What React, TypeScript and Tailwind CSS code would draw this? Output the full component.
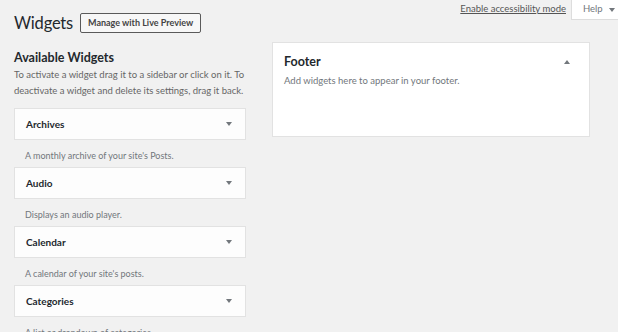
const FONT = { fontFamily: 'Lato, "Liberation Sans", sans-serif' };

const widgets = [
  { name: 'Archives', desc: "A monthly archive of your site's Posts." },
  { name: 'Audio', desc: 'Displays an audio player.' },
  { name: 'Calendar', desc: "A calendar of your site's posts." },
  { name: 'Categories', desc: 'A list or dropdown of categories.' },
];

function Caret({ up = false }: { up?: boolean }) {
  return (
    <svg width="6" height="4" viewBox="0 0 6 4" className="shrink-0">
      <path d={up ? 'M0 4 L3 0 L6 4 Z' : 'M0 0 L6 0 L3 4 Z'} fill="#72777c" />
    </svg>
  );
}

export default function App() {
  return (
    <div className="relative h-[332px] w-[618px] overflow-hidden bg-[#f1f1f1] text-[#444]" style={FONT}>
      {/* screen meta links */}
      <div className="absolute right-0 top-0 flex items-start gap-[5px]">
        <a className="mt-[3px] text-[9.5px] leading-[12px] text-[#555] underline">Enable accessibility mode</a>
        <div className="flex h-[20px] w-[47px] items-center gap-[6px] border border-t-0 border-r-0 border-[#ddd] bg-white pl-[11px] text-[9.5px] text-[#72777c]">
          Help <Caret />
        </div>
      </div>

      <div className="mt-[12px] flex h-[21px] items-center gap-[7px] pl-[14px]">
        <h1 className="text-[16.5px] font-normal leading-[20px] tracking-[-0.2px] text-[#23282d]">Widgets</h1>
        <button className="flex h-[20px] items-center rounded-[2px] border border-[#5a5a5a] bg-[#f7f7f7] px-[7px] text-[9px] font-bold text-[#444]">
          Manage with Live Preview
        </button>
      </div>

      <div className="mt-[9px] flex gap-[26px] pl-[14px]">
        <div className="w-[232px] pt-[8px]">
          <h2 className="text-[12.5px] font-bold leading-[16px] text-[#23282d]">Available Widgets</h2>
          <p className="mt-[1px] w-[236px] text-[9.5px] leading-[16px] text-[#666]">
            To activate a widget drag it to a sidebar or click on it. To deactivate a widget and delete its settings, drag it back.
          </p>
          <div className="mt-[9px] flex flex-col">
            {widgets.map((w) => (
              <div key={w.name} className="h-[59px]">
                <div className="flex h-[32px] items-center justify-between border border-[#e2e2e2] bg-[#fdfdfd] pl-[11px] pr-[13px]">
                  <span className="text-[10px] font-bold text-[#23282d]">{w.name}</span>
                  <Caret />
                </div>
                <p className="pl-[11px] pt-[9px] text-[9px] leading-[14px] text-[#72777c]">{w.desc}</p>
              </div>
            ))}
          </div>
        </div>

        <div className="h-[95px] w-[318px] self-start border border-[#e2e2e2] bg-white pl-[11px] pr-[19px] pt-[10px]">
          <div className="flex h-[18px] items-center justify-between">
            <h3 className="text-[12.5px] font-bold leading-[18px] text-[#23282d]">Footer</h3>
            <Caret up />
          </div>
          <p className="mt-[3px] text-[9.5px] leading-[14px] text-[#72777c]">Add widgets here to appear in your footer.</p>
        </div>
      </div>
    </div>
  );
}
